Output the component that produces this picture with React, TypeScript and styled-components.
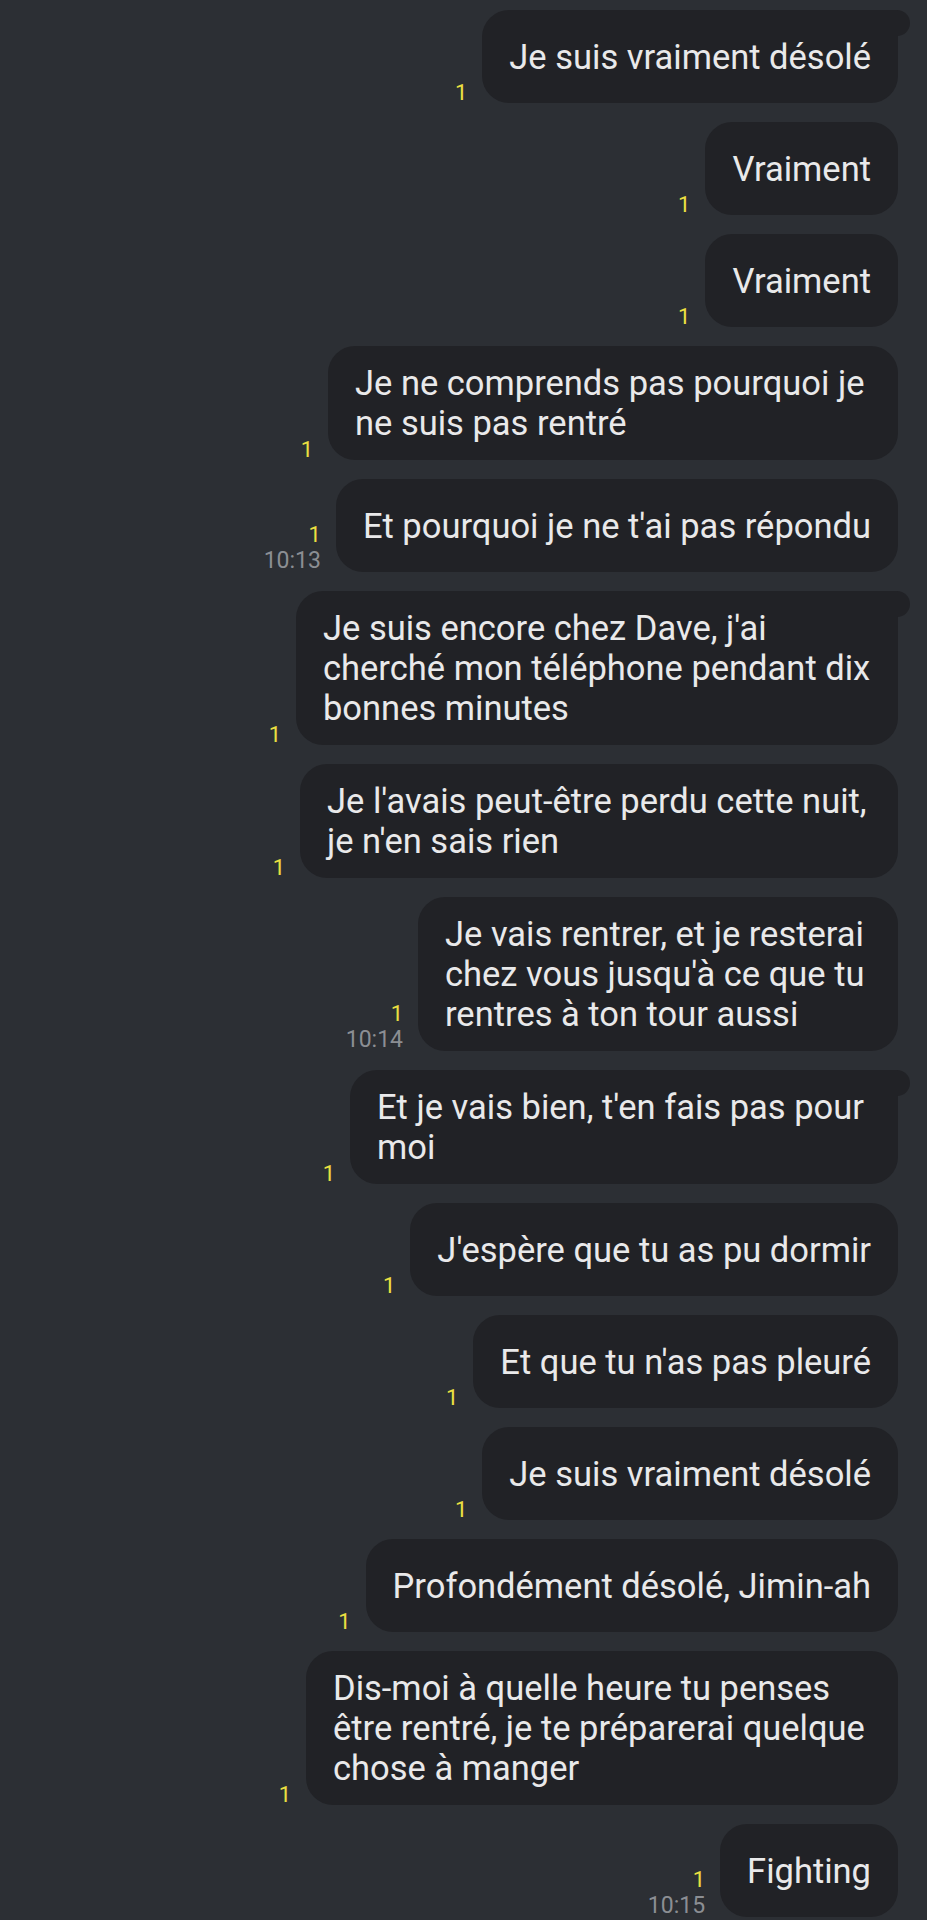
import React from "react";
import styled, { createGlobalStyle } from "styled-components";

const GlobalStyle = createGlobalStyle`
  html, body {
    margin: 0;
    padding: 0;
    background: #2c2f34;
  }
  body {
    font-family: Roboto, "Noto Sans", "Liberation Sans", sans-serif;
    -webkit-font-smoothing: antialiased;
  }
`;

const Screen = styled.div`
  min-height: 1920px;
  background: #2c2f34;
  padding: 10px 0 0 0;
  box-sizing: border-box;
  display: flex;
  flex-direction: column;
  gap: 19px;
`;

const Row = styled.div`
  display: flex;
  justify-content: flex-end;
  align-items: flex-end;
  gap: 15px;
  padding-right: 29px;
`;

const Meta = styled.div`
  display: flex;
  flex-direction: column;
  align-items: flex-end;
  gap: 5px;
  flex-shrink: 0;
`;

const Unread = styled.span`
  font-size: 22px;
  line-height: 20px;
  color: #ece041;
`;

const Time = styled.span`
  font-size: 23px;
  line-height: 22px;
  color: #8b8e93;
`;

const Bubble = styled.div<{ $tail?: boolean; $width?: number }>`
  position: relative;
  box-sizing: border-box;
  min-height: 93px;
  ${(p) => (p.$width ? `width: ${p.$width}px;` : "")}
  padding: 17px 27px;
  display: flex;
  flex-direction: column;
  justify-content: center;
  background: #212226;
  border-radius: 27px;
  ${(p) => (p.$tail ? "border-top-right-radius: 0;" : "")}
  color: #e9e9ea;
  font-size: 34.5px;
  line-height: 40px;

  &::after {
    content: "";
    display: ${(p) => (p.$tail ? "block" : "none")};
    position: absolute;
    top: 0;
    right: -12px;
    width: 28px;
    height: 26px;
    background: #212226;
    border-radius: 0 13px 13px 0;
  }
`;

const Line = styled.span`
  display: block;
  white-space: nowrap;
`;

type Msg = {
  lines: string[];
  time?: string;
  tail?: boolean;
  width?: number;
};

const messages: Msg[] = [
  { lines: ["Je suis vraiment désolé"], tail: true },
  { lines: ["Vraiment"] },
  { lines: ["Vraiment"] },
  { lines: ["Je ne comprends pas pourquoi je", "ne suis pas rentré"], width: 570 },
  { lines: ["Et pourquoi je ne t'ai pas répondu"], time: "10:13" },
  {
    lines: ["Je suis encore chez Dave, j'ai", "cherché mon téléphone pendant dix", "bonnes minutes"],
    tail: true,
    width: 602,
  },
  { lines: ["Je l'avais peut-être perdu cette nuit,", "je n'en sais rien"], width: 598 },
  {
    lines: ["Je vais rentrer, et je resterai", "chez vous jusqu'à ce que tu", "rentres à ton tour aussi"],
    time: "10:14",
    width: 480,
  },
  { lines: ["Et je vais bien, t'en fais pas pour", "moi"], tail: true, width: 548 },
  { lines: ["J'espère que tu as pu dormir"] },
  { lines: ["Et que tu n'as pas pleuré"] },
  { lines: ["Je suis vraiment désolé"] },
  { lines: ["Profondément désolé, Jimin-ah"] },
  {
    lines: ["Dis-moi à quelle heure tu penses", "être rentré, je te préparerai quelque", "chose à manger"],
    width: 592,
  },
  { lines: ["Fighting"], time: "10:15" },
];

export default function App() {
  return (
    <>
      <GlobalStyle />
      <Screen>
        {messages.map((m, i) => (
          <Row key={i}>
            <Meta>
              <Unread>1</Unread>
              {m.time && <Time>{m.time}</Time>}
            </Meta>
            <Bubble $tail={m.tail} $width={m.width}>
              {m.lines.map((l, j) => (
                <Line key={j}>{l}</Line>
              ))}
            </Bubble>
          </Row>
        ))}
      </Screen>
    </>
  );
}
